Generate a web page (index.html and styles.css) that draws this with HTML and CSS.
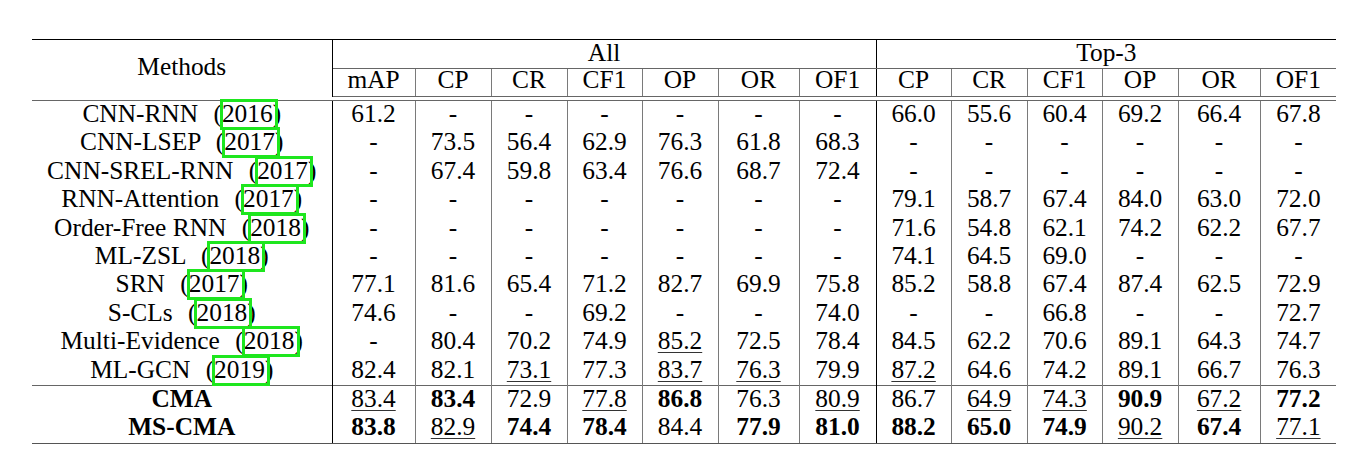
FILE: index.html
```html
<!DOCTYPE html>
<html lang="en">
<head>
  <meta charset="UTF-8">
  <title>Multi-label results</title>
  <link rel="stylesheet" href="styles.css">
</head>
<body>
  <div class="page">
    <table class="results">
      <colgroup>
        <col style="width:300px"><col style="width:83px"><col style="width:76px"><col style="width:76px">
        <col style="width:75px"><col style="width:76px"><col style="width:81px"><col style="width:77px">
        <col style="width:75px"><col style="width:76px"><col style="width:75px"><col style="width:76px">
        <col style="width:82px"><col style="width:76px">
      </colgroup>
      <thead>
        <tr class="head-top">
          <th rowspan="2" class="methods">Methods</th>
          <th colspan="7" class="group sep">All</th>
          <th colspan="6" class="group">Top-3</th>
        </tr>
        <tr class="head-sub">
          <th>mAP</th><th>CP</th><th>CR</th><th>CF1</th><th>OP</th><th>OR</th><th class="sep">OF1</th>
          <th>CP</th><th>CR</th><th>CF1</th><th>OP</th><th>OR</th><th class="last">OF1</th>
        </tr>
        <tr class="gap"><td colspan="14"></td></tr>
      </thead>
      <tbody>
        <tr>
          <td class="method">CNN-RNN <span class="cite">(<span class="yr">2016</span>)</span></td>
          <td>61.2</td><td>-</td><td>-</td><td>-</td><td>-</td><td>-</td><td>-</td>
          <td>66.0</td><td>55.6</td><td>60.4</td><td>69.2</td><td>66.4</td><td>67.8</td>
        </tr>
        <tr>
          <td class="method">CNN-LSEP <span class="cite">(<span class="yr">2017</span>)</span></td>
          <td>-</td><td>73.5</td><td>56.4</td><td>62.9</td><td>76.3</td><td>61.8</td><td>68.3</td>
          <td>-</td><td>-</td><td>-</td><td>-</td><td>-</td><td>-</td>
        </tr>
        <tr>
          <td class="method">CNN-SREL-RNN <span class="cite">(<span class="yr">2017</span>)</span></td>
          <td>-</td><td>67.4</td><td>59.8</td><td>63.4</td><td>76.6</td><td>68.7</td><td>72.4</td>
          <td>-</td><td>-</td><td>-</td><td>-</td><td>-</td><td>-</td>
        </tr>
        <tr>
          <td class="method">RNN-Attention <span class="cite">(<span class="yr">2017</span>)</span></td>
          <td>-</td><td>-</td><td>-</td><td>-</td><td>-</td><td>-</td><td>-</td>
          <td>79.1</td><td>58.7</td><td>67.4</td><td>84.0</td><td>63.0</td><td>72.0</td>
        </tr>
        <tr>
          <td class="method">Order-Free RNN <span class="cite">(<span class="yr">2018</span>)</span></td>
          <td>-</td><td>-</td><td>-</td><td>-</td><td>-</td><td>-</td><td>-</td>
          <td>71.6</td><td>54.8</td><td>62.1</td><td>74.2</td><td>62.2</td><td>67.7</td>
        </tr>
        <tr>
          <td class="method">ML-ZSL <span class="cite">(<span class="yr">2018</span>)</span></td>
          <td>-</td><td>-</td><td>-</td><td>-</td><td>-</td><td>-</td><td>-</td>
          <td>74.1</td><td>64.5</td><td>69.0</td><td>-</td><td>-</td><td>-</td>
        </tr>
        <tr>
          <td class="method">SRN <span class="cite">(<span class="yr">2017</span>)</span></td>
          <td>77.1</td><td>81.6</td><td>65.4</td><td>71.2</td><td>82.7</td><td>69.9</td><td>75.8</td>
          <td>85.2</td><td>58.8</td><td>67.4</td><td>87.4</td><td>62.5</td><td>72.9</td>
        </tr>
        <tr>
          <td class="method">S-CLs <span class="cite">(<span class="yr">2018</span>)</span></td>
          <td>74.6</td><td>-</td><td>-</td><td>69.2</td><td>-</td><td>-</td><td>74.0</td>
          <td>-</td><td>-</td><td>66.8</td><td>-</td><td>-</td><td>72.7</td>
        </tr>
        <tr>
          <td class="method">Multi-Evidence <span class="cite">(<span class="yr">2018</span>)</span></td>
          <td>-</td><td>80.4</td><td>70.2</td><td>74.9</td><td><span class="u">85.2</span></td><td>72.5</td><td>78.4</td>
          <td>84.5</td><td>62.2</td><td>70.6</td><td>89.1</td><td>64.3</td><td>74.7</td>
        </tr>
        <tr>
          <td class="method">ML-GCN <span class="cite">(<span class="yr">2019</span>)</span></td>
          <td>82.4</td><td>82.1</td><td><span class="u">73.1</span></td><td>77.3</td><td><span class="u">83.7</span></td><td><span class="u">76.3</span></td><td>79.9</td>
          <td><span class="u">87.2</span></td><td>64.6</td><td>74.2</td><td>89.1</td><td>66.7</td><td>76.3</td>
        </tr>
        <tr class="ours first-ours">
          <td class="method b">CMA</td>
          <td><span class="u">83.4</span></td><td class="b">83.4</td><td>72.9</td><td><span class="u">77.8</span></td><td class="b">86.8</td><td>76.3</td><td><span class="u">80.9</span></td>
          <td>86.7</td><td><span class="u">64.9</span></td><td><span class="u">74.3</span></td><td class="b">90.9</td><td><span class="u">67.2</span></td><td class="b">77.2</td>
        </tr>
        <tr class="ours last-row">
          <td class="method b">MS-CMA</td>
          <td class="b">83.8</td><td><span class="u">82.9</span></td><td class="b">74.4</td><td class="b">78.4</td><td>84.4</td><td class="b">77.9</td><td class="b">81.0</td>
          <td class="b">88.2</td><td class="b">65.0</td><td class="b">74.9</td><td><span class="u">90.2</span></td><td class="b">67.4</td><td><span class="u">77.1</span></td>
        </tr>
      </tbody>
    </table>
  </div>
</body>
</html>
```

FILE: styles.css
```css
body {
  margin: 0;
  background: #fff;
  color: #000;
  font-family: "Liberation Serif", serif;
}
.page {
  padding: 39px 0 0 32px;
}
.results {
  table-layout: fixed;
  width: 1304px;
  border-collapse: collapse;
  font-size: 25.4px;
  border-top: 1px solid #000;
}
.results th,
.results td {
  font-family: "Liberation Serif", serif;
  padding: 0 0 4.4px;
  line-height: 24px;
  text-align: center;
  font-weight: normal;
  white-space: nowrap;
}
.results td {
  border-right: 1px solid #7a7a7a;
}
.results td:last-child {
  border-right: none;
}
.results td:first-child,
.results td:nth-child(8) {
  border-right-color: #000;
}
.head-top th {
  padding-bottom: 4px;
}
.head-top .methods {
  border-right: 1px solid #000;
  vertical-align: middle;
  padding-bottom: 5px;
}
.head-top .group {
  border-bottom: 1px solid #666;
}
.head-top .sep {
  border-right: 1px solid #000;
}
.head-sub th {
  line-height: 20px;
  padding-bottom: 7px;
  border-right: 1px solid #7a7a7a;
  border-bottom: 1px solid #666;
}
.head-sub th.sep {
  border-right-color: #000;
}
.head-sub th.last {
  border-right: none;
}
.gap td {
  height: 3px;
  padding: 0;
  line-height: 0;
  border-right: none;
  border-bottom: 1px solid #666;
}
.first-ours td {
  border-top: 1px solid #666;
}
.last-row td {
  border-bottom: 1px solid #555;
}
.cite {
  margin-left: 9px;
}
.yr {
  position: relative;
}
.yr::after {
  content: "";
  position: absolute;
  left: -2px;
  top: 0;
  width: 58px;
  height: 31px;
  box-sizing: border-box;
  border: 3px solid #1ee61e;
}
.results .b {
  font-weight: bold;
}
.u {
  text-decoration: underline;
  text-decoration-thickness: 1px;
  text-underline-offset: 3px;
  text-decoration-color: #333;
}
```
